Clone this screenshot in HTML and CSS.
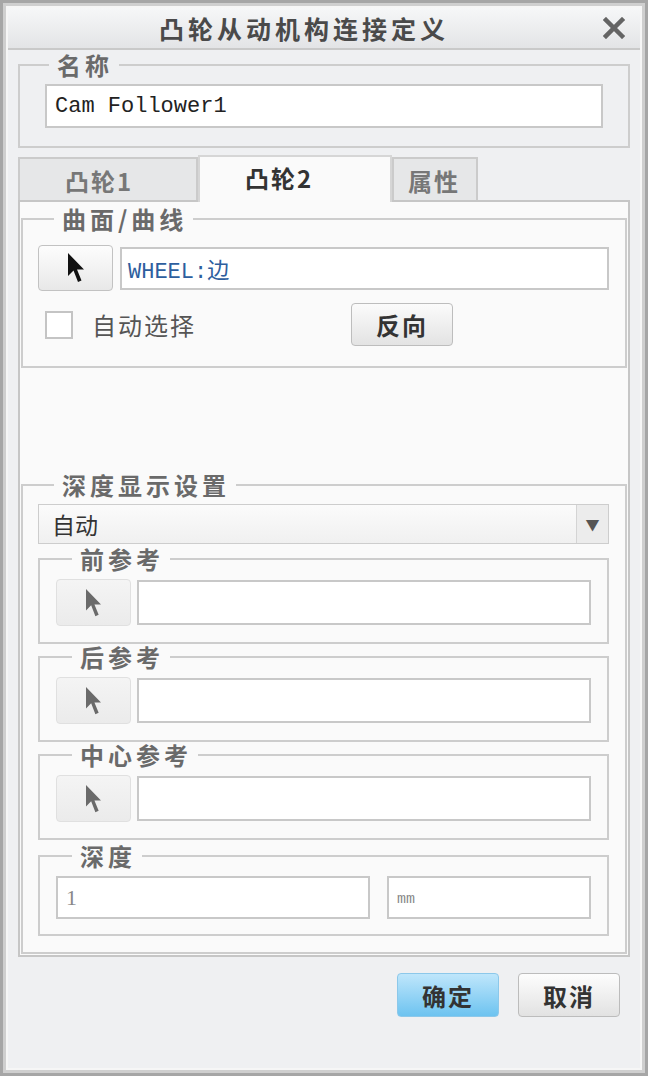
FILE: index.html
```html
<!DOCTYPE html>
<html lang="zh-CN">
<head>
    <meta charset="UTF-8">
    <title>凸轮从动机构连接定义</title>
    <link rel="stylesheet" href="styles.css">
</head>
<body>
    <div class="window">
        <div class="inner">
            <div class="titlebar">
                <span class="title">凸轮从动机构连接定义</span>
                <span class="close">
                    <svg width="22" height="22" viewBox="0 0 22 22"><path d="M3 3 L19 19 M19 3 L3 19" stroke="#646464" stroke-width="4.5" stroke-linecap="square"/></svg>
                </span>
            </div>

            <div class="content">
                <!-- 名称 -->
                <fieldset class="group name-group">
                    <legend>名称</legend>
                    <div class="field name-field">Cam Follower1</div>
                </fieldset>

                <!-- 选项卡 -->
                <div class="tabs">
                    <div class="tab tab-wide">凸轮1</div>
                    <div class="tab tab-wide active">凸轮2</div>
                    <div class="tab tab-small">属性</div>
                </div>

                <div class="panel">
                    <fieldset class="group surface">
                        <legend>曲面/曲线</legend>
                        <div class="pick-row">
                            <button class="pick pick-main">
                                <svg width="20" height="32" viewBox="0 0 20 32"><path d="M2 1 L2 24 L7.5 18.5 L12 30 L15.5 28.5 L11 17.5 L18 17.5 Z" fill="#111"/></svg>
                            </button>
                            <div class="field ref-field">WHEEL:边</div>
                        </div>
                        <div class="opt-row">
                            <label class="check"><span class="box"></span>自动选择</label>
                            <button class="btn btn-flip">反向</button>
                        </div>
                    </fieldset>

                    <fieldset class="group depth-display">
                        <legend>深度显示设置</legend>
                        <div class="select">
                            <span class="select-value">自动</span>
                            <span class="select-arrow">▼</span>
                        </div>

                        <fieldset class="group sub first">
                            <legend>前参考</legend>
                            <div class="pick-row">
                                <button class="pick pick-sub">
                                    <svg width="19" height="30" viewBox="0 0 20 32"><path d="M2 1 L2 24 L7.5 18.5 L12 30 L15.5 28.5 L11 17.5 L18 17.5 Z" fill="#6a6a6a"/></svg>
                                </button>
                                <div class="field ref-field"></div>
                            </div>
                        </fieldset>

                        <fieldset class="group sub">
                            <legend>后参考</legend>
                            <div class="pick-row">
                                <button class="pick pick-sub">
                                    <svg width="19" height="30" viewBox="0 0 20 32"><path d="M2 1 L2 24 L7.5 18.5 L12 30 L15.5 28.5 L11 17.5 L18 17.5 Z" fill="#6a6a6a"/></svg>
                                </button>
                                <div class="field ref-field"></div>
                            </div>
                        </fieldset>

                        <fieldset class="group sub">
                            <legend>中心参考</legend>
                            <div class="pick-row">
                                <button class="pick pick-sub">
                                    <svg width="19" height="30" viewBox="0 0 20 32"><path d="M2 1 L2 24 L7.5 18.5 L12 30 L15.5 28.5 L11 17.5 L18 17.5 Z" fill="#6a6a6a"/></svg>
                                </button>
                                <div class="field ref-field"></div>
                            </div>
                        </fieldset>

                        <fieldset class="group sub depth">
                            <legend>深度</legend>
                            <div class="depth-row">
                                <div class="field depth-value">1</div>
                                <div class="field depth-unit">mm</div>
                            </div>
                        </fieldset>
                    </fieldset>
                </div>

                <div class="actions">
                    <button class="btn btn-ok">确定</button>
                    <button class="btn btn-cancel">取消</button>
                </div>
            </div>
        </div>
    </div>
</body>
</html>
```

FILE: styles.css
```css
/* Estilos generales */
* {
    box-sizing: border-box;
}

body {
    margin: 0;
    padding: 0;
    font-family: "Noto Sans CJK SC", sans-serif;
    background-color: #a6a6a6;
}

.window {
    width: 648px;
    height: 1076px;
    border: 3px solid #a6a6a6;
    padding: 3px;
    background-color: #cfcfcf;
}

.inner {
    height: 100%;
    border: 2px solid #f6f6f6;
    background-color: #eff0f2;
}

/* Barra de titulo */
.titlebar {
    display: flex;
    align-items: center;
    height: 42px;
    border-bottom: 2px solid #c9c9c9;
    background: linear-gradient(#f6f7f8, #e3e4e6);
}

.title {
    flex: 1;
    text-align: center;
    font-size: 25px;
    font-weight: bold;
    letter-spacing: 4px;
    color: #4a4a4a;
    padding-left: 4px;
}

.close {
    width: 44px;
    display: flex;
    justify-content: flex-start;
    padding-left: 7px;
}

.content {
    padding: 0 10px;
}

/* Grupos */
.group {
    margin: 0;
    border: 2px solid #cdcdcd;
    min-width: 0;
}

.group legend {
    padding: 0 6px 0 8px;
    font-size: 24px;
    line-height: 26px;
    font-weight: bold;
    letter-spacing: 4px;
    color: #6a6a6a;
}

.name-group {
    margin-top: 2px;
    padding: 6px 25px 18px 25px;
}

.name-group legend {
    margin-left: 4px;
}

.field {
    height: 43px;
    border: 2px solid #c8c8c8;
    background-color: #ffffff;
    display: flex;
    align-items: center;
    padding-left: 8px;
    font-family: "Liberation Mono", "Noto Sans CJK SC", monospace;
    font-size: 22px;
    color: #222;
}

.name-field {
    height: 44px;
}

/* Pestañas */
.tabs {
    display: flex;
    align-items: flex-end;
    margin-top: 7px;
    position: relative;
    z-index: 1;
}

.tab {
    height: 43px;
    border: 2px solid #cbcbcb;
    border-bottom: none;
    background-color: #e6e7e8;
    font-size: 24px;
    font-weight: bold;
    letter-spacing: 2px;
    color: #777;
    padding-top: 7px;
    line-height: 30px;
}

.tab-wide {
    width: 180px;
    padding-left: 45px;
}

.tab.active {
    width: 194px;
    height: 47px;
    margin-bottom: -2px;
    background-color: #fafafa;
    color: #333;
    border-color: #d6d6d6;
    padding-top: 6px;
}

.tab-small {
    width: 86px;
    padding-left: 14px;
}

.panel {
    border: 2px solid #c6c6c6;
    padding: 1px;
    background-color: #fafafa;
}

.surface {
    margin-top: 3px;
    padding: 13px 16px 20px 15px;
}

.surface legend,
.depth-display legend {
    margin-left: 16px;
}

.pick-row {
    display: flex;
    gap: 7px;
    align-items: center;
}

.pick {
    height: 46px;
    width: 75px;
    border-radius: 4px;
    display: flex;
    align-items: center;
    justify-content: center;
    padding: 0;
}

.pick-main {
    border: 1px solid #c2c2c2;
    background: linear-gradient(#fdfdfd, #e8e8e8);
}

.pick-sub {
    border: 1px solid #e0e0e0;
    background: linear-gradient(#f4f4f4, #ebebeb);
    height: 47px;
    width: 75px;
}

.pick-row .field {
    flex: 1;
}

.ref-field {
    color: #2d5e9e;
    padding-left: 6px;
}

.sub .ref-field {
    height: 45px;
    margin-left: -1px;
}

.opt-row {
    display: flex;
    align-items: center;
    margin-top: 12px;
}

.check {
    width: 306px;
    margin-left: 7px;
    display: flex;
    align-items: center;
    gap: 19px;
    font-size: 24px;
    letter-spacing: 2px;
    color: #555;
}

.box {
    width: 28px;
    height: 28px;
    border: 2px solid #c4c4c4;
    background-color: #ffffff;
}

.btn {
    height: 43px;
    border-radius: 4px;
    font-family: "Noto Sans CJK SC", sans-serif;
    font-size: 24px;
    font-weight: bold;
    letter-spacing: 2px;
    color: #333;
    cursor: pointer;
    border: 1px solid #bdbdbd;
    background: linear-gradient(#fbfbfb, #e3e3e3);
}

.btn-flip {
    width: 102px;
}

/* Ajustes de profundidad */
.depth-display {
    margin-top: 104px;
    padding: 6px 16px 16px 15px;
}

.select {
    display: flex;
    height: 40px;
    border: 1px solid #cdcdcd;
    background: linear-gradient(#fbfbfb, #f0f0f0);
}

.select-value {
    flex: 1;
    padding-left: 13px;
    font-size: 23px;
    line-height: 38px;
    color: #333;
}

.select-arrow {
    width: 32px;
    border-left: 1px solid #d4d4d4;
    background-color: #ececec;
    color: #555;
    font-size: 14px;
    display: flex;
    align-items: center;
    justify-content: center;
}

.sub {
    padding: 7px 16px 16px 16px;
    margin-top: 0;
}

.sub legend {
    margin-left: 16px;
}

.sub.first {
    margin-top: 2px;
}

.sub.depth {
    margin-top: 3px;
    padding-bottom: 15px;
}

.depth-row {
    display: flex;
    gap: 17px;
}

.depth-value {
    width: 314px;
    color: #888;
    font-family: "Liberation Serif", serif;
    font-size: 22px;
}

.depth-unit {
    flex: 1;
    color: #888;
    font-family: "Liberation Mono", monospace;
    font-size: 15px;
    padding-top: 4px;
}

/* Botones finales */
.actions {
    display: flex;
    justify-content: flex-end;
    gap: 19px;
    margin-top: 16px;
    margin-right: 10px;
}

.actions .btn {
    height: 44px;
    width: 102px;
}

.btn-ok {
    width: 103px;
    border-color: #8cc8ea;
    background: linear-gradient(#bfe6fb, #6dc3f0);
}

.btn-cancel {
    border-color: #bcbcbc;
    background: linear-gradient(#fdfdfd, #e2e2e2);
}
```
